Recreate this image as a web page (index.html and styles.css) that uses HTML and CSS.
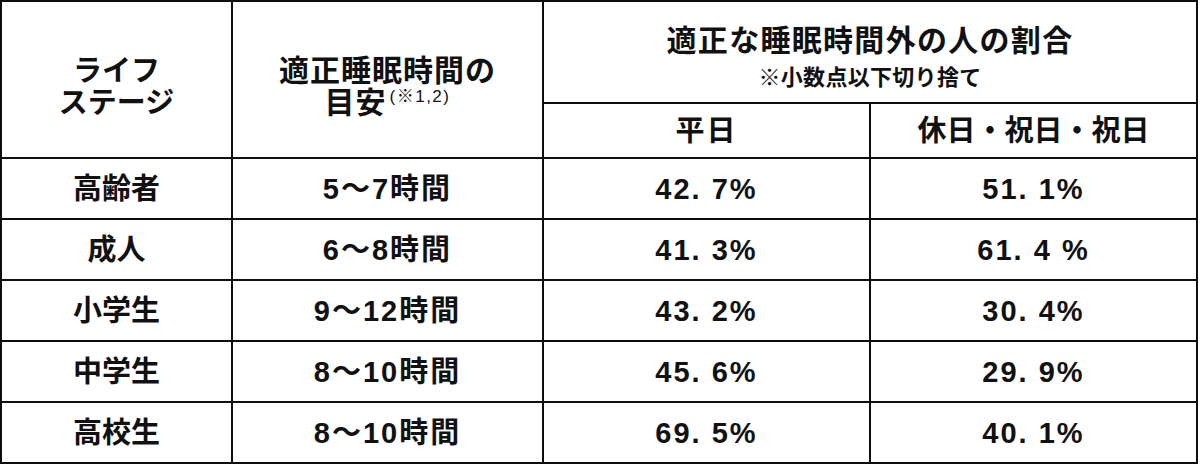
FILE: index.html
```html
<!DOCTYPE html>
<html lang="ja">
<head>
<meta charset="utf-8">
<title>適正睡眠時間</title>
<link rel="stylesheet" href="styles.css">
</head>
<body>
<div class="wrap">
<table class="sleep">
  <colgroup>
    <col class="c1"><col class="c2"><col class="c3"><col class="c4">
  </colgroup>
  <thead>
    <tr class="h1">
      <th rowspan="2" class="tall">ライフ<br>ステージ</th>
      <th rowspan="2" class="tall wide">適正睡眠時間の<br>目安<span class="note">(※1,2)</span></th>
      <th colspan="2" class="group">適正な睡眠時間外の人の割合<br><span class="sub">※小数点以下切り捨て</span></th>
    </tr>
    <tr class="h2">
      <th class="spaced">平日</th>
      <th>休日・祝日・祝日</th>
    </tr>
  </thead>
  <tbody>
    <tr><th>高齢者</th><td class="hours">5～7時間</td><td class="pct">42. 7%</td><td class="pct">51. 1%</td></tr>
    <tr><th>成人</th><td class="hours">6～8時間</td><td class="pct">41. 3%</td><td class="pct">61. 4 %</td></tr>
    <tr><th>小学生</th><td class="hours">9～12時間</td><td class="pct">43. 2%</td><td class="pct">30. 4%</td></tr>
    <tr><th>中学生</th><td class="hours">8～10時間</td><td class="pct">45. 6%</td><td class="pct">29. 9%</td></tr>
    <tr><th>高校生</th><td class="hours">8～10時間</td><td class="pct">69. 5%</td><td class="pct">40. 1%</td></tr>
  </tbody>
</table>
</div>
</body>
</html>
```

FILE: styles.css
```css
html, body {
  margin: 0;
  padding: 0;
  background: #ffffff;
}

.wrap {
  padding: 0;
}

.sleep {
  border-collapse: collapse;
  table-layout: fixed;
  width: 1196px;
  margin: 0;
  font-family: "Liberation Sans", "Noto Sans CJK JP", sans-serif;
  font-weight: 700;
  color: #111111;
}

.c1 { width: 231px; }
.c2 { width: 311px; }
.c3 { width: 327px; }
.c4 { width: 327px; }

.sleep th,
.sleep td {
  border: 2px solid #0e0e0e;
  text-align: center;
  vertical-align: middle;
  padding: 0;
  font-weight: 700;
  font-size: 29px;
  line-height: 34px;
}

.sleep .h1 { height: 102px; }
.sleep .h2 { height: 55px; }
.sleep tbody tr { height: 61px; }

.sleep .tall {
  padding-top: 14px;
  line-height: 32px;
}

.sleep .wide {
  font-size: 30px;
  letter-spacing: 1px;
}

.note {
  font-size: 17px;
  font-weight: 400;
  letter-spacing: 1.5px;
  vertical-align: top;
  line-height: 17px;
  position: relative;
  top: 1px;
  margin-left: 3px;
}

.sleep .group {
  font-size: 30px;
  line-height: 34px;
  padding-top: 12px;
  letter-spacing: 1.3px;
}

.sub {
  font-size: 22px;
  line-height: 30px;
  letter-spacing: 0.3px;
  font-weight: 700;
}

.spaced {
  letter-spacing: 2px;
}

.sleep .hours {
  letter-spacing: 2px;
}

.sleep .pct {
  letter-spacing: 2px;
  white-space: pre;
}
```
